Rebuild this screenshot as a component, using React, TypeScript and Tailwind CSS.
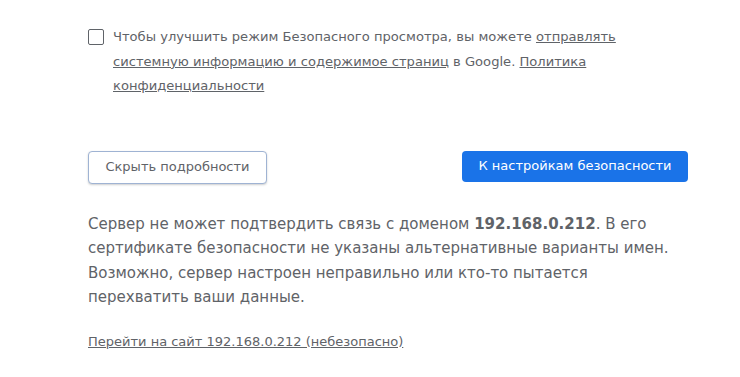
export default function App() {
  return (
    <div className="min-h-[377px] w-[740px] bg-white font-['DejaVu_Sans',sans-serif] text-[#5f6368]">
      <div className="ml-[88px] w-[600px] pt-[25px]">
        <label className="flex items-start gap-[9px] text-[13.1px] leading-[24.5px]">
          <span className="mt-[4px] h-[16px] w-[16px] shrink-0 rounded-[2px] border-[1.5px] border-[#5f6368]" />
          <span>
            Чтобы улучшить режим Безопасного просмотра, вы можете{" "}
            <a className="underline">отправлять системную информацию и содержимое страниц</a> в Google.{" "}
            <a className="underline">Политика конфиденциальности</a>
          </span>
        </label>

        <div className="mt-[52px] flex items-start justify-between">
          <button className="h-[33px] w-[179px] rounded-[4px] border border-[#9fb3d3] bg-white pb-[1px] text-[13px] text-[#5f6368] shadow-[0_1px_2px_rgba(60,64,67,0.25)]">
            Скрыть подробности
          </button>
          <button className="h-[31px] w-[226px] rounded-[4px] bg-[#1a73e8] pb-[1px] text-[13px] text-white">
            К настройкам безопасности
          </button>
        </div>

        <p className="mt-[28px] text-[15px] leading-[24.5px]">
          Сервер не может подтвердить связь с доменом <strong className="font-bold">192.168.0.212</strong>. В его
          сертификате безопасности не указаны альтернативные варианты имен. Возможно, сервер настроен неправильно или
          кто-то пытается перехватить ваши данные.
        </p>

        <p className="mt-[20px] text-[13px] leading-[24px]">
          <a className="underline">Перейти на сайт 192.168.0.212 (небезопасно)</a>
        </p>
      </div>
    </div>
  );
}
